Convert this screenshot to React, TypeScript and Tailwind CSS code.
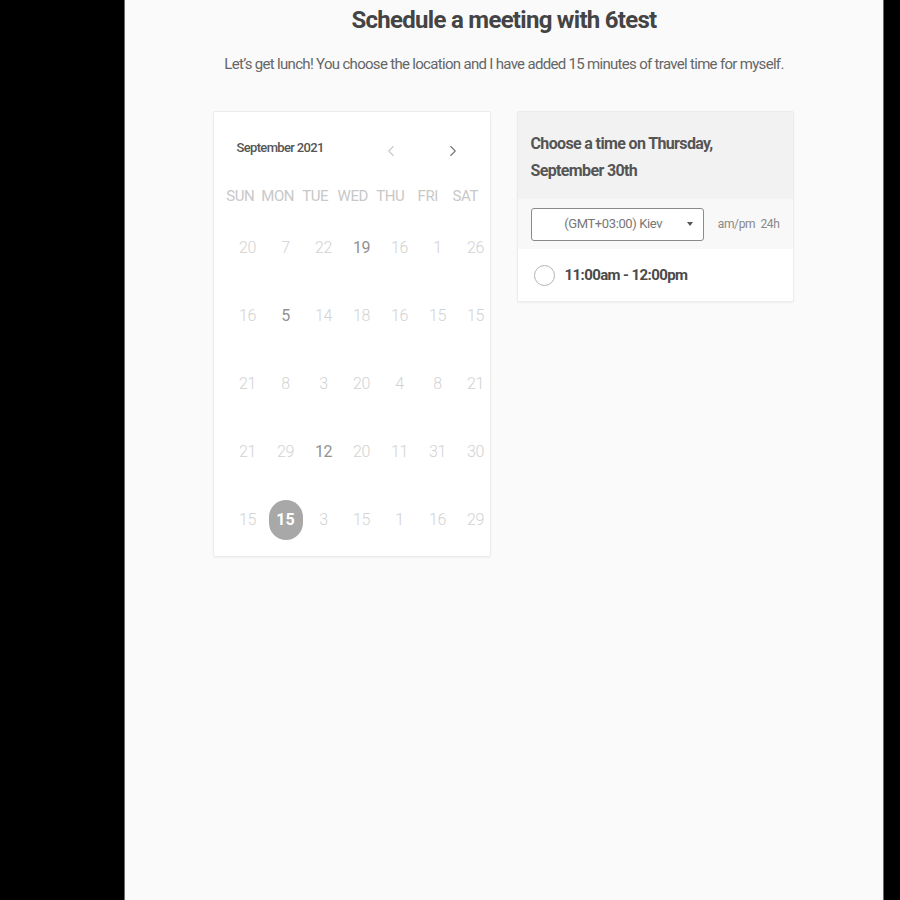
import { ChevronLeft, ChevronRight } from "lucide-react";

const days = ["SUN", "MON", "TUE", "WED", "THU", "FRI", "SAT"];

// n = number, b = available (darker), s = selected
const weeks: { n: number; b?: boolean; s?: boolean }[][] = [
  [{ n: 20 }, { n: 7 }, { n: 22 }, { n: 19, b: true }, { n: 16 }, { n: 1 }, { n: 26 }],
  [{ n: 16 }, { n: 5, b: true }, { n: 14 }, { n: 18 }, { n: 16 }, { n: 15 }, { n: 15 }],
  [{ n: 21 }, { n: 8 }, { n: 3 }, { n: 20 }, { n: 4 }, { n: 8 }, { n: 21 }],
  [{ n: 21 }, { n: 29 }, { n: 12, b: true }, { n: 20 }, { n: 11 }, { n: 31 }, { n: 30 }],
  [{ n: 15 }, { n: 15, s: true }, { n: 3 }, { n: 15 }, { n: 1 }, { n: 16 }, { n: 29 }],
];

function Calendar() {
  return (
    <div className="w-[278px] h-[446px] bg-white border border-[#ececec] rounded-[2px] shadow-[0_1px_2px_rgba(0,0,0,0.04)]">
      <div className="mt-[26px] h-[20px] flex items-center">
        <span className="pl-[23px] text-[13px] font-medium text-[#555] tracking-[-0.05em]">
          September 2021
        </span>
        <ChevronLeft className="ml-[58px] mt-[6px] w-[18px] h-[18px] text-[#c9c9c9]" strokeWidth={1.5} />
        <ChevronRight className="ml-[44px] mt-[6px] w-[18px] h-[18px] text-[#777]" strokeWidth={1.5} />
      </div>
      <div className="mt-[27px] ml-[8px] h-[20px] grid grid-cols-[repeat(7,37.5px)] items-center">
        {days.map((d) => (
          <span key={d} className="text-center text-[15px] text-[#c8c8c8] tracking-[-0.03em]">
            {d}
          </span>
        ))}
      </div>
      <div className="mt-[9px] ml-[15px]">
        {weeks.map((w, i) => (
          <div key={i} className="h-[68px] grid grid-cols-[repeat(7,38px)] items-center">
            {w.map((d, j) =>
              d.s ? (
                <span key={j} className="flex justify-center">
                  <span className="w-[34px] h-[40px] rounded-full bg-[#a8a8a8] text-white text-[16px] font-bold flex items-center justify-center">
                    {d.n}
                  </span>
                </span>
              ) : (
                <span
                  key={j}
                  className={
                    d.b
                      ? "text-center text-[16px] font-normal text-[#929292] tracking-[-0.03em]"
                      : "text-center text-[16px] font-light text-[#d2d2d2] tracking-[-0.03em]"
                  }
                >
                  {d.n}
                </span>
              )
            )}
          </div>
        ))}
      </div>
    </div>
  );
}

function TimePanel() {
  return (
    <div className="w-[277px] self-start bg-white border border-[#ececec] rounded-[2px] shadow-[0_1px_2px_rgba(0,0,0,0.05)]">
      <div className="bg-[#f2f2f2] h-[87px] pl-[13px] pt-[18px] text-[16px] leading-[27px] font-bold text-[#555] tracking-[-0.04em]">
        Choose a time on Thursday,
        <br />
        September 30th
      </div>
      <div className="bg-[#f8f8f8] h-[50px] px-[13px] flex items-center">
        <div className="w-[177px] h-[33px] bg-white border border-[#8a8a8a] rounded-[3px] flex items-center">
          <span className="flex-1 text-center pl-[8px] text-[13px] text-[#777] tracking-[-0.03em]">
            (GMT+03:00) Kiev
          </span>
          <span className="w-0 h-0 mr-[10px] border-l-[3px] border-r-[3px] border-t-[4px] border-l-transparent border-r-transparent border-t-[#555]" />
        </div>
        <span className="ml-[14px] text-[12px] text-[#888] tracking-[-0.03em]">am/pm&nbsp;&nbsp;24h</span>
      </div>
      <div className="h-[52px] pl-[16px] flex items-center">
        <span className="w-[21px] h-[21px] rounded-full border-[1.5px] border-[#b3b3b3]" />
        <span className="ml-[10px] text-[15px] font-bold text-[#4a4a4a] tracking-[-0.04em]">
          11:00am - 12:00pm
        </span>
      </div>
    </div>
  );
}

export default function App() {
  return (
    <div className="h-[900px] flex bg-black font-['Roboto',sans-serif]">
      <div className="w-[124px] shrink-0 bg-black" />
      <div className="w-px shrink-0 bg-[#6b6b6b]" />
      <div className="flex-1 bg-[#fafafa] flex flex-col items-center">
        <h1 className="mt-[5px] text-[24px] leading-[30px] font-bold text-[#444] tracking-[-0.03em]">
          Schedule a meeting with 6test
        </h1>
        <p className="mt-[19px] text-[15px] leading-[20px] text-[#666] tracking-[-0.046em]">
          Let’s get lunch! You choose the location and I have added 15 minutes of travel time for myself.
        </p>
        <div className="mt-[37px] -ml-[2px] flex gap-[26px]">
          <Calendar />
          <TimePanel />
        </div>
      </div>
      <div className="w-px shrink-0 bg-[#6b6b6b]" />
      <div className="w-[16px] shrink-0 bg-black" />
    </div>
  );
}
